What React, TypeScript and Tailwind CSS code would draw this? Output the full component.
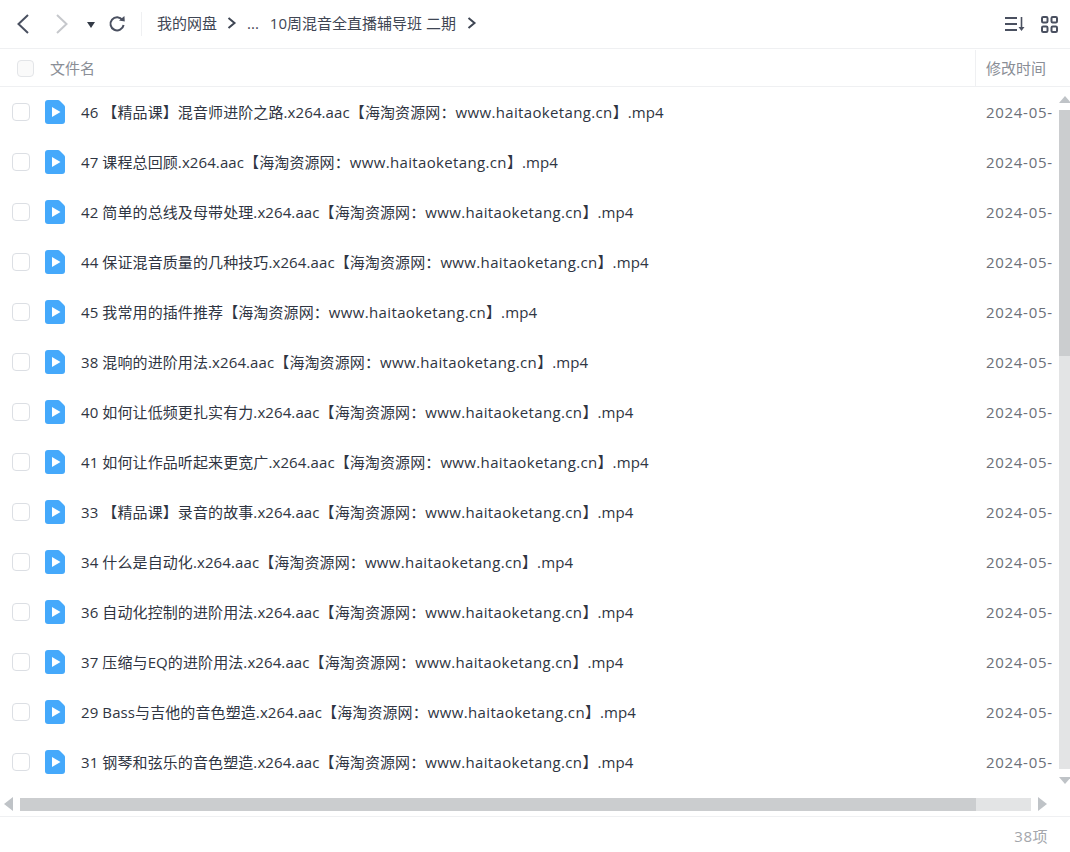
const FONT = '"Open Sans", "Noto Sans CJK SC", sans-serif';

const files = [
  "46 【精品课】混音师进阶之路.x264.aac",
  "47 课程总回顾.x264.aac",
  "42 简单的总线及母带处理.x264.aac",
  "44 保证混音质量的几种技巧.x264.aac",
  "45 我常用的插件推荐",
  "38 混响的进阶用法.x264.aac",
  "40 如何让低频更扎实有力.x264.aac",
  "41 如何让作品听起来更宽广.x264.aac",
  "33 【精品课】录音的故事.x264.aac",
  "34 什么是自动化.x264.aac",
  "36 自动化控制的进阶用法.x264.aac",
  "37 压缩与EQ的进阶用法.x264.aac",
  "29 Bass与吉他的音色塑造.x264.aac",
  "31 钢琴和弦乐的音色塑造.x264.aac",
];

function Chevron({ dir, className }: { dir: "left" | "right"; className: string }) {
  return (
    <svg width="16" height="22" viewBox="0 0 16 22" fill="none" className={className}>
      <path
        d={dir === "left" ? "M13 2 L3.5 11 L13 20" : "M3 2 L12.5 11 L3 20"}
        stroke="currentColor"
        strokeWidth="2"
      />
    </svg>
  );
}

function Crumb() {
  return (
    <svg width="10" height="12" viewBox="0 0 10 12" fill="none" className="text-[#3f4654]">
      <path d="M1.5 1 L7.5 6 L1.5 11" stroke="currentColor" strokeWidth="2" />
    </svg>
  );
}

function VideoIcon() {
  return (
    <svg width="20" height="24" viewBox="0 0 20 24" className="shrink-0">
      <path
        d="M3 0 H13 Q14 0 15 1 L19 5 Q20 6 20 7 V21 a3 3 0 0 1 -3 3 H3 a3 3 0 0 1 -3 -3 V3 a3 3 0 0 1 3 -3 Z"
        fill="#45a9fb"
      />
      <path d="M7 7 L15.5 12 L7 17 Z" fill="#ffffff" />
    </svg>
  );
}

function Arrow({ points, size = "h-[10px] w-[12px]" }: { points: string; size?: string }) {
  return (
    <svg viewBox="0 0 12 10" className={size}>
      <polygon points={points} fill="#bfc3c7" />
    </svg>
  );
}

export default function App() {
  return (
    <div
      className="flex h-[852px] w-[1070px] flex-col overflow-hidden bg-white text-[#3f4654]"
      style={{ fontFamily: FONT }}
    >
      {/* Toolbar */}
      <div className="flex h-[49px] shrink-0 items-center border-b border-[#eff0f2] pl-[15px] pr-[12px]">
        <Chevron dir="left" className="text-[#4a5060]" />
        <Chevron dir="right" className="ml-[23px] text-[#c6c8cc]" />
        <svg width="8" height="6" viewBox="0 0 8 6" className="ml-[17px] mt-[1px]">
          <polygon points="0,0 8,0 4,6" fill="#333a46" />
        </svg>
        <svg width="18" height="18" viewBox="0 0 18 18" fill="none" className="ml-[13px]">
          <path d="M14.5 5 A6.6 6.6 0 1 0 15.6 10" stroke="#4a5060" strokeWidth="2" />
          <polygon points="11,5.6 16.8,6.6 16.4,1" fill="#4a5060" />
        </svg>
        <div className="ml-[15px] h-[24px] w-px bg-[#eff0f2]" />
        <div className="ml-[15px] flex -translate-y-[1px] items-center text-[15px] leading-[20px]">
          <span>我的网盘</span>
          <span className="ml-[10px]"><Crumb /></span>
          <span className="ml-[10px]">...</span>
          <span className="ml-[11px]">10周混音全直播辅导班 二期</span>
          <span className="ml-[11px]"><Crumb /></span>
        </div>
        <div className="ml-auto flex items-center gap-[16px]">
          <svg width="20" height="16" viewBox="0 0 20 16" fill="none" stroke="#4a5060" strokeWidth="2">
            <path d="M0 2 H12 M0 8 H12 M0 14 H12" />
            <path d="M16.5 1 V13" strokeWidth="1.6" />
            <polygon points="13.5,11 19.5,11 16.5,15" fill="#4a5060" stroke="none" />
          </svg>
          <svg width="17" height="17" viewBox="0 0 17 17" fill="none" stroke="#4a5060" strokeWidth="2">
            <rect x="1" y="1" width="5.5" height="5.5" rx="1.2" />
            <rect x="10.5" y="1" width="5.5" height="5.5" rx="1.2" />
            <rect x="1" y="10.5" width="5.5" height="5.5" rx="1.2" />
            <rect x="10.5" y="10.5" width="5.5" height="5.5" rx="1.2" />
          </svg>
        </div>
      </div>

      {/* Column header */}
      <div className="flex h-[38px] shrink-0 items-center border-b border-[#eff0f2] pt-[1px] text-[15px] text-[#8a8e96]">
        <span className="ml-[17px] h-[17px] w-[17px] rounded-[4px] border border-[#e3e5e8] bg-[#fafafa]" />
        <span className="ml-[16px] flex-1">文件名</span>
        <span className="flex h-full w-[95px] items-center border-l border-[#eff0f2] pl-[10px]">修改时间</span>
      </div>

      {/* File list + vertical scrollbar */}
      <div className="flex h-[700px] shrink-0">
        <div className="min-w-0 flex-1">
          {files.map((name) => (
            <div key={name} className="flex h-[50px] items-center">
              <span className="ml-[12px] h-[18px] w-[18px] shrink-0 rounded-[4px] border border-[#dcdfe4] bg-white" />
              <span className="ml-[15px]"><VideoIcon /></span>
              <span className="ml-[16px] flex-1 whitespace-nowrap text-[15px] tracking-[0.1px] text-[#2f3542]">
                {name}【海淘资源网：
                <span className="tracking-[0.35px]">www.haitaoketang.cn</span>】.mp4
              </span>
              <span className="w-[83px] shrink-0 overflow-hidden whitespace-nowrap pl-[10px] text-[15px] tracking-[0.7px] text-[#6b7079]">
                2024-05-
              </span>
            </div>
          ))}
        </div>
        <div className="flex w-[11px] shrink-0 flex-col pt-[9px]">
          <Arrow points="6,0 12,7 0,7" size="h-[10px] w-[12px] mb-[4px]" />
          <div className="flex h-[660px] flex-col bg-[#e3e4e5]">
            <div className="h-[246px] bg-[#cbcdcf]" />
          </div>
          <Arrow points="0,0 12,0 6,7" size="mt-[8px] h-[10px] w-[12px]" />
        </div>
      </div>

      {/* Horizontal scrollbar */}
      <div className="mt-[10px] flex h-[14px] shrink-0 items-center pl-[4px]">
        <svg width="9" height="14" viewBox="0 0 9 14"><polygon points="9,0 9,14 0,7" fill="#bfc3c7" /></svg>
        <div className="ml-[7px] h-[13px] w-[1011px] bg-[#e3e4e5]">
          <div className="h-full w-[956px] bg-[#cbcdcf]" />
        </div>
        <svg width="9" height="14" viewBox="0 0 9 14" className="ml-[7px]"><polygon points="0,0 0,14 9,7" fill="#bfc3c7" /></svg>
      </div>

      {/* Footer */}
      <div className="mt-[5px] flex flex-1 items-center justify-end border-t border-[#eff0f2] pr-[22px] pt-[3px] text-[15px] tracking-[0.5px] text-[#a3a6ab]">
        38项
      </div>
    </div>
  );
}
